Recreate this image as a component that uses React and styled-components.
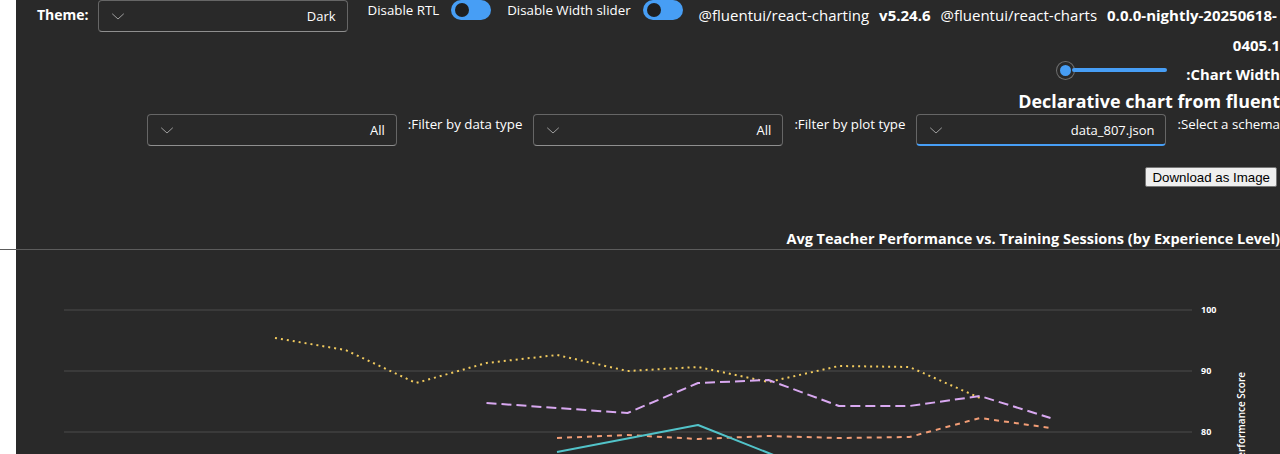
import React from 'react';
import styled, { createGlobalStyle } from 'styled-components';

const GlobalStyle = createGlobalStyle`
    html, body {
        margin: 0;
        padding: 0;
        background: #ffffff;
        overflow: hidden;
    }
    body {
        font-family: "Open Sans", "Noto Sans", sans-serif;
    }
`;

// chart data, read off as page coordinates (x from left of page, y from top)
const X0 = 275;
const STEP = 70.5;
const xAt = (i) => X0 + STEP * i;

const series = [
    {
        color: '#f2cb5e',
        dash: '2 4',
        points: [[0, 338], [1, 350], [2, 383], [3, 363], [4, 355], [5, 371], [6, 367], [7, 382], [8, 366], [9, 367], [10, 398]],
    },
    {
        color: '#d8a8f0',
        dash: '10 5',
        points: [[3, 403], [4, 408], [5, 413], [6, 383], [7, 380], [8, 406], [9, 406], [10, 396], [11, 418]],
    },
    {
        color: '#f29d76',
        dash: '5 5',
        points: [[4, 438], [5, 435], [6, 439], [7, 436], [8, 438], [9, 437], [10, 418], [11, 428]],
    },
    {
        color: '#52c3c9',
        dash: null,
        points: [[4, 452], [5, 438.5], [6, 425], [7, 453], [8, 481]],
    },
];

const gridLines = [
    { value: 100, y: 310 },
    { value: 90, y: 371 },
    { value: 80, y: 432 },
];

// the svg starts at page x=16, y=250
const OX = 16;
const OY = 250;

const Chevron = () => (
    <svg width="14" height="12" viewBox="0 0 14 12">
        <path d="M1.5 4 L7 9 L12.5 4" fill="none" stroke="#9e9e9e" strokeWidth="1" strokeLinecap="round" strokeLinejoin="round" />
    </svg>
);

const App = () => {
    return (
        <>
            <GlobalStyle />
            <Page>
                <TopBar>
                    <ThemeLabel>Theme:</ThemeLabel>
                    <Dropdown>
                        <Chevron />
                        <DropdownValue>Dark</DropdownValue>
                    </Dropdown>
                    <ToggleGroup>
                        <ToggleLabel>Disable RTL</ToggleLabel>
                        <Toggle><Knob /></Toggle>
                    </ToggleGroup>
                    <ToggleGroup>
                        <ToggleLabel>Disable Width slider</ToggleLabel>
                        <Toggle><Knob /></Toggle>
                    </ToggleGroup>
                    <Versions>
                        <VersionLine>
                            <Pkg>@fluentui/react-charting</Pkg>
                            <Ver>v5.24.6</Ver>
                            <Pkg>@fluentui/react-charts</Pkg>
                            <Ver>0.0.0-nightly-20250618-</Ver>
                        </VersionLine>
                        <VersionLine $right>
                            <Ver>0405.1</Ver>
                        </VersionLine>
                    </Versions>
                </TopBar>

                <SliderRow>
                    <Slider>
                        <Thumb />
                        <Track />
                    </Slider>
                    <RowLabel $bold>:Chart Width</RowLabel>
                </SliderRow>

                <Heading>Declarative chart from fluent</Heading>

                <FilterRow>
                    <Dropdown>
                        <Chevron />
                        <DropdownValue>All</DropdownValue>
                    </Dropdown>
                    <FilterLabel>:Filter by data type</FilterLabel>
                    <Dropdown>
                        <Chevron />
                        <DropdownValue>All</DropdownValue>
                    </Dropdown>
                    <FilterLabel>:Filter by plot type</FilterLabel>
                    <Dropdown $focused>
                        <Chevron />
                        <DropdownValue>data_807.json</DropdownValue>
                    </Dropdown>
                    <FilterLabel>:Select a schema</FilterLabel>
                </FilterRow>

                <ButtonRow>
                    <DownloadButton>Download as Image</DownloadButton>
                </ButtonRow>

                <ChartTitle>Avg Teacher Performance vs. Training Sessions (by Experience Level)</ChartTitle>
                <Divider />

                <ChartArea>
                    <svg width="1264" height="204" viewBox="0 0 1264 204">
                        {gridLines.map((g) => (
                            <g key={g.value}>
                                <line x1={64 - OX} x2={1192 - OX} y1={g.y - OY} y2={g.y - OY} stroke="#4d4d4d" strokeWidth="1.2" />
                                <text x={1201 - OX} y={g.y - OY + 3} fill="#ffffff" fontSize="9" fontWeight="700" fontFamily="Open Sans, sans-serif">{g.value}</text>
                            </g>
                        ))}
                        {series.map((s, idx) => (
                            <polyline
                                key={idx}
                                points={s.points.map(([i, y]) => `${xAt(i) - OX},${y - OY}`).join(' ')}
                                fill="none"
                                stroke={s.color}
                                strokeWidth="2"
                                strokeDasharray={s.dash || undefined}
                                strokeLinejoin="round"
                            />
                        ))}
                        <text
                            transform={`translate(${1245 - OX}, ${372 - OY}) rotate(-90)`}
                            textAnchor="end"
                            fill="#ffffff"
                            fontSize="10"
                            fontWeight="600"
                            fontFamily="Open Sans, sans-serif"
                        >
                            Avg Performance Score
                        </text>
                    </svg>
                </ChartArea>
            </Page>
        </>
    );
};

const Page = styled.div`
    margin-left: 16px;
    width: 1264px;
    height: 454px;
    background: #292929;
    color: #ffffff;
    font-family: "Open Sans", "Noto Sans", sans-serif;
`;

const TopBar = styled.div`
    display: flex;
    align-items: flex-start;
    height: 60px;
    padding-left: 21px;
`;

const ThemeLabel = styled.span`
    font-size: 14px;
    font-weight: 700;
    line-height: 30px;
    margin-right: 9px;
`;

const Dropdown = styled.div`
    box-sizing: border-box;
    width: 250px;
    height: 32px;
    display: flex;
    align-items: center;
    justify-content: space-between;
    padding: 0 11px 0 12px;
    border: 1px solid #666666;
    border-bottom: ${({ $focused }) => ($focused ? '2px solid #479ef5' : '1px solid #8f8f8f')};
    border-radius: 4px;
    background: #292929;
    flex-shrink: 0;
`;

const DropdownValue = styled.span`
    font-size: 13px;
    color: #ffffff;
`;

const ToggleGroup = styled.div`
    display: flex;
    align-items: center;
    gap: 12px;
    height: 20px;
    margin-left: 20px;

    & + & {
        margin-left: 16px;
    }
`;

const ToggleLabel = styled.span`
    font-size: 13.3px;
    line-height: 20px;
`;

const Toggle = styled.div`
    box-sizing: border-box;
    width: 40px;
    height: 20px;
    border-radius: 10px;
    background: #479ef5;
    display: flex;
    align-items: center;
    padding-left: 4px;
`;

const Knob = styled.div`
    width: 14px;
    height: 14px;
    border-radius: 50%;
    background: #1f1f1f;
`;

const Versions = styled.div`
    flex: 1;
    min-width: 0;
    margin-left: 16px;
`;

const VersionLine = styled.div`
    display: flex;
    justify-content: ${({ $right }) => ($right ? 'flex-end' : 'flex-start')};
    gap: 10px;
    white-space: nowrap;
    line-height: 30px;
    font-size: 15px;
`;

const Pkg = styled.span`
    font-weight: 400;
`;

const Ver = styled.span`
    font-weight: 700;
`;

const SliderRow = styled.div`
    display: flex;
    justify-content: flex-end;
    align-items: flex-start;
    height: 28px;
`;

const Slider = styled.div`
    display: flex;
    align-items: center;
    height: 20px;
    width: 110px;
    margin-right: 19px;
`;

const Thumb = styled.div`
    box-sizing: border-box;
    width: 17px;
    height: 17px;
    border-radius: 50%;
    background: #479ef5;
    border: 3px solid #292929;
    box-shadow: 0 0 0 1px #6e6e6e;
    flex-shrink: 0;
`;

const Track = styled.div`
    height: 4px;
    flex: 1;
    border-radius: 2px;
    background: #479ef5;
    margin-left: -2px;
`;

const RowLabel = styled.span`
    font-size: 14.8px;
    font-weight: ${({ $bold }) => ($bold ? 700 : 400)};
    line-height: 28px;
`;

const Heading = styled.h3`
    margin: 0;
    font-size: 17.9px;
    font-weight: 700;
    line-height: 26px;
    text-align: right;
    white-space: nowrap;
`;

const FilterRow = styled.div`
    display: flex;
    justify-content: flex-end;
    align-items: flex-start;
    height: 32px;
`;

const FilterLabel = styled.span`
    font-size: 13.3px;
    font-weight: 500;
    line-height: 20px;
    margin: 0 11px;

    &:last-child {
        margin-right: 0;
    }
`;

const ButtonRow = styled.div`
    display: flex;
    justify-content: flex-end;
    padding: 21px 3px 0 0;
`;

const DownloadButton = styled.button`
    font-family: "Liberation Sans", Arial, sans-serif;
    font-size: 13.3px;
    height: 20px;
    padding: 0 6px;
    color: #000000;
    background: #efefef;
    border: 1px solid #767676;
    border-radius: 2px;
    cursor: pointer;
`;

const ChartTitle = styled.div`
    margin-top: 42px;
    font-size: 14.5px;
    font-weight: 700;
    line-height: 20px;
    text-align: right;
    white-space: nowrap;
`;

const Divider = styled.div`
    height: 1px;
    margin-left: -16px;
    background: #5c5c5c;
`;

const ChartArea = styled.div`
    height: 204px;
    overflow: hidden;

    svg {
        display: block;
    }
`;

export default App;
